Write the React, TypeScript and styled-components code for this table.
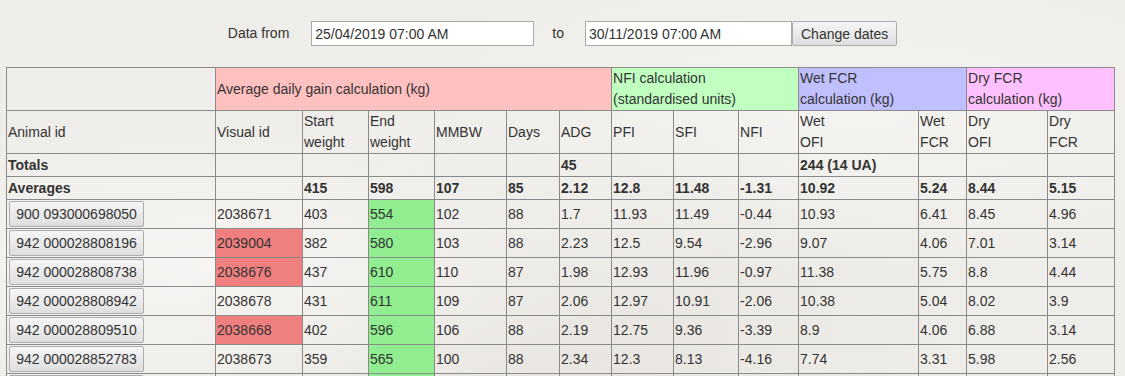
import styled, { createGlobalStyle } from "styled-components";

const GlobalStyle = createGlobalStyle`
  html, body {
    margin: 0;
    padding: 0;
    background-color: #efede9;
    background-image:
      radial-gradient(ellipse at 20% 70%, rgba(255,255,255,0.45), transparent 40%),
      radial-gradient(ellipse at 75% 30%, rgba(255,255,255,0.35), transparent 45%),
      radial-gradient(ellipse at 50% 90%, rgba(220,215,208,0.35), transparent 50%);
    font-family: "Liberation Sans", Arial, sans-serif;
    font-size: 14px;
    color: #333;
  }
`;

const Page = styled.div`
  width: 1125px;
  height: 376px;
  overflow: hidden;
  padding: 21px 0 0 6px;
  box-sizing: border-box;
`;

const DateBar = styled.form`
  display: flex;
  align-items: center;
  justify-content: center;
  height: 25px;
  margin: 0 0 21px -6px;
`;

const Label = styled.span<{ $left?: number; $right?: number }>`
  margin-left: ${({ $left }) => $left ?? 0}px;
  margin-right: ${({ $right }) => $right ?? 0}px;
  line-height: 25px;
`;

const DateInput = styled.input<{ $width: number }>`
  width: ${({ $width }) => $width}px;
  height: 25px;
  box-sizing: border-box;
  border: 1px solid #a9a9a9;
  background: #fff;
  padding: 0 3px;
  font: 14px "Liberation Sans", Arial, sans-serif;
  color: #333;
  outline: none;
`;

const GreyButton = styled.button`
  height: 25px;
  box-sizing: border-box;
  padding: 0 8px;
  border: 1px solid #adadad;
  border-radius: 2px;
  background: linear-gradient(#f6f6f6, #dedede);
  font: 14px "Liberation Sans", Arial, sans-serif;
  color: #333;
`;

const IdButton = styled(GreyButton)`
  display: block;
  height: 26px;
  width: 135px;
  padding: 0 6px;
  margin: 0 0 1px 1px;
  white-space: nowrap;
`;

const Table = styled.table`
  border-collapse: collapse;
  table-layout: fixed;
  width: 1109px;
  border: 1px solid #8a8a8a;
`;

const HeadCell = styled.th<{ $bg?: string }>`
  border: 1px solid #8a8a8a;
  padding: 0 1px;
  line-height: 21px;
  font-weight: normal;
  text-align: left;
  vertical-align: middle;
  background: ${({ $bg }) => $bg ?? "transparent"};
  overflow: hidden;
`;

const Cell = styled.td<{ $bg?: string; $bold?: boolean }>`
  border: 1px solid #8a8a8a;
  padding: 1px 1px 0;
  line-height: 21px;
  vertical-align: middle;
  font-weight: ${({ $bold }) => ($bold ? "bold" : "normal")};
  background: ${({ $bg }) => $bg ?? "transparent"};
  white-space: nowrap;
  overflow: hidden;
`;

const widths = [209, 87, 66, 66, 72, 53, 52, 62, 65, 60, 120, 48, 81, 67];

const RED = "#f08080";
const GREEN = "#90ee90";

type Row = {
  id: string;
  visual: string;
  redVisual?: boolean;
  values: string[];
};

const rows: Row[] = [
  { id: "900 093000698050", visual: "2038671", values: ["403", "554", "102", "88", "1.7", "11.93", "11.49", "-0.44", "10.93", "6.41", "8.45", "4.96"] },
  { id: "942 000028808196", visual: "2039004", redVisual: true, values: ["382", "580", "103", "88", "2.23", "12.5", "9.54", "-2.96", "9.07", "4.06", "7.01", "3.14"] },
  { id: "942 000028808738", visual: "2038676", redVisual: true, values: ["437", "610", "110", "87", "1.98", "12.93", "11.96", "-0.97", "11.38", "5.75", "8.8", "4.44"] },
  { id: "942 000028808942", visual: "2038678", values: ["431", "611", "109", "87", "2.06", "12.97", "10.91", "-2.06", "10.38", "5.04", "8.02", "3.9"] },
  { id: "942 000028809510", visual: "2038668", redVisual: true, values: ["402", "596", "106", "88", "2.19", "12.75", "9.36", "-3.39", "8.9", "4.06", "6.88", "3.14"] },
  { id: "942 000028852783", visual: "2038673", values: ["359", "565", "100", "88", "2.34", "12.3", "8.13", "-4.16", "7.74", "3.31", "5.98", "2.56"] },
  { id: "942 000028853016", visual: "2038680", values: ["410", "588", "104", "88", "2.02", "12.6", "10.4", "-2.2", "9.85", "4.88", "7.6", "3.75"] },
];

const averages = ["415", "598", "107", "85", "2.12", "12.8", "11.48", "-1.31", "10.92", "5.24", "8.44", "5.15"];

export default function App() {
  return (
    <Page>
      <GlobalStyle />
      <DateBar onSubmit={(e) => e.preventDefault()}>
        <Label $right={22}>Data from</Label>
        <DateInput $width={223} defaultValue="25/04/2019 07:00 AM" />
        <Label $left={18} $right={21}>to</Label>
        <DateInput $width={207} defaultValue="30/11/2019 07:00 AM" />
        <GreyButton type="button">Change dates</GreyButton>
      </DateBar>

      <Table>
        <colgroup>
          {widths.map((w, i) => (
            <col key={i} style={{ width: w }} />
          ))}
        </colgroup>
        <thead>
          <tr>
            <HeadCell />
            <HeadCell colSpan={6} $bg="#ffc0c0">Average daily gain calculation (kg)</HeadCell>
            <HeadCell colSpan={3} $bg="#c0ffc0">NFI calculation<br />(standardised units)</HeadCell>
            <HeadCell colSpan={2} $bg="#c0c0ff">Wet FCR<br />calculation (kg)</HeadCell>
            <HeadCell colSpan={2} $bg="#ffc0ff">Dry FCR<br />calculation (kg)</HeadCell>
          </tr>
          <tr>
            <HeadCell>Animal id</HeadCell>
            <HeadCell>Visual id</HeadCell>
            <HeadCell>Start<br />weight</HeadCell>
            <HeadCell>End<br />weight</HeadCell>
            <HeadCell>MMBW</HeadCell>
            <HeadCell>Days</HeadCell>
            <HeadCell>ADG</HeadCell>
            <HeadCell>PFI</HeadCell>
            <HeadCell>SFI</HeadCell>
            <HeadCell>NFI</HeadCell>
            <HeadCell>Wet<br />OFI</HeadCell>
            <HeadCell>Wet<br />FCR</HeadCell>
            <HeadCell>Dry<br />OFI</HeadCell>
            <HeadCell>Dry<br />FCR</HeadCell>
          </tr>
        </thead>
        <tbody>
          <tr>
            <Cell $bold>Totals</Cell>
            <Cell />
            <Cell />
            <Cell />
            <Cell />
            <Cell />
            <Cell $bold>45</Cell>
            <Cell />
            <Cell />
            <Cell />
            <Cell $bold>244 (14 UA)</Cell>
            <Cell />
            <Cell />
            <Cell />
          </tr>
          <tr>
            <Cell $bold>Averages</Cell>
            <Cell />
            {averages.map((v, i) => (
              <Cell key={i} $bold>{v}</Cell>
            ))}
          </tr>
          {rows.map((r) => (
            <tr key={r.id}>
              <Cell>
                <IdButton type="button">{r.id}</IdButton>
              </Cell>
              <Cell $bg={r.redVisual ? RED : undefined}>{r.visual}</Cell>
              {r.values.map((v, i) => (
                <Cell key={i} $bg={i === 1 ? GREEN : undefined}>{v}</Cell>
              ))}
            </tr>
          ))}
        </tbody>
      </Table>
    </Page>
  );
}
